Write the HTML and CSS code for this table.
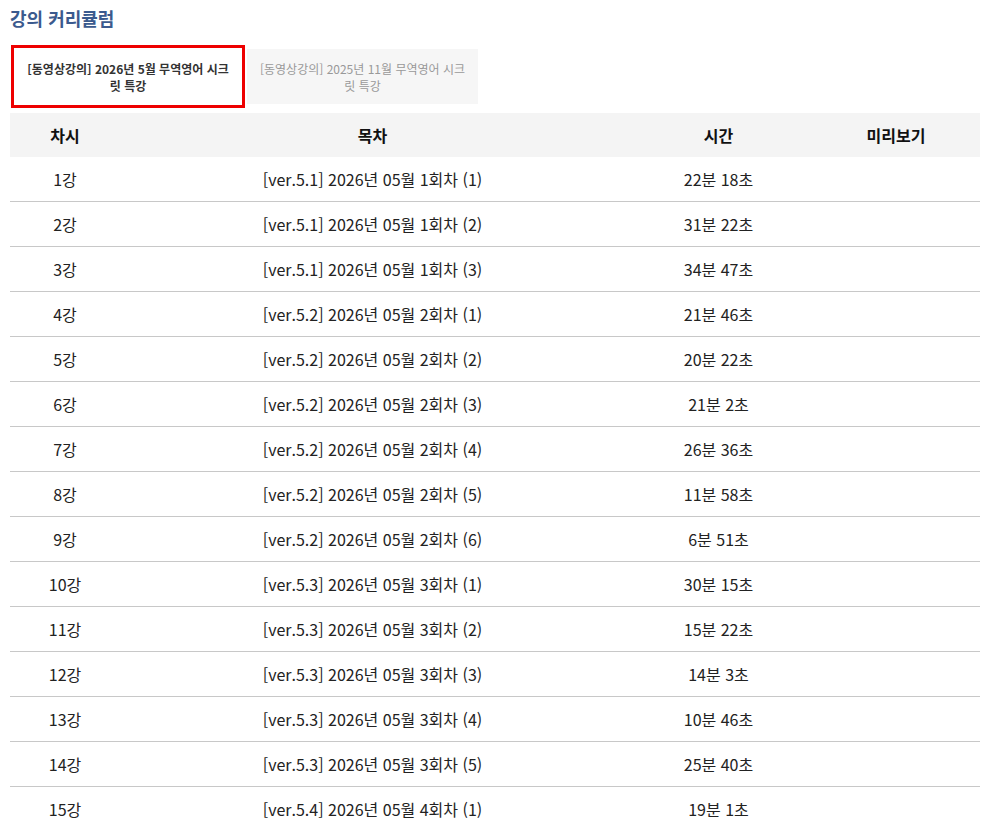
FILE: index.html
```html
<!DOCTYPE html>
<html lang="ko">
<head>
<meta charset="utf-8">
<link rel="stylesheet" href="styles.css">
</head>
<body>
<div class="wrap">
  <h2 class="title">강의 커리큘럼</h2>
  <ul class="tabs">
    <li class="tab active">[동영상강의] 2026년 5월 무역영어 시크<br>릿 특강</li>
    <li class="tab">[동영상강의] 2025년 11월 무역영어 시크<br>릿 특강</li>
  </ul>
  <table class="curri">
    <colgroup>
      <col class="c1"><col class="c2"><col class="c3"><col class="c4">
    </colgroup>
    <thead>
      <tr><th>차시</th><th>목차</th><th>시간</th><th>미리보기</th></tr>
    </thead>
    <tbody>
      <tr><td>1강</td><td>[ver.5.1] 2026년 05월 1회차 (1)</td><td>22분 18초</td><td></td></tr>
      <tr><td>2강</td><td>[ver.5.1] 2026년 05월 1회차 (2)</td><td>31분 22초</td><td></td></tr>
      <tr><td>3강</td><td>[ver.5.1] 2026년 05월 1회차 (3)</td><td>34분 47초</td><td></td></tr>
      <tr><td>4강</td><td>[ver.5.2] 2026년 05월 2회차 (1)</td><td>21분 46초</td><td></td></tr>
      <tr><td>5강</td><td>[ver.5.2] 2026년 05월 2회차 (2)</td><td>20분 22초</td><td></td></tr>
      <tr><td>6강</td><td>[ver.5.2] 2026년 05월 2회차 (3)</td><td>21분 2초</td><td></td></tr>
      <tr><td>7강</td><td>[ver.5.2] 2026년 05월 2회차 (4)</td><td>26분 36초</td><td></td></tr>
      <tr><td>8강</td><td>[ver.5.2] 2026년 05월 2회차 (5)</td><td>11분 58초</td><td></td></tr>
      <tr><td>9강</td><td>[ver.5.2] 2026년 05월 2회차 (6)</td><td>6분 51초</td><td></td></tr>
      <tr><td>10강</td><td>[ver.5.3] 2026년 05월 3회차 (1)</td><td>30분 15초</td><td></td></tr>
      <tr><td>11강</td><td>[ver.5.3] 2026년 05월 3회차 (2)</td><td>15분 22초</td><td></td></tr>
      <tr><td>12강</td><td>[ver.5.3] 2026년 05월 3회차 (3)</td><td>14분 3초</td><td></td></tr>
      <tr><td>13강</td><td>[ver.5.3] 2026년 05월 3회차 (4)</td><td>10분 46초</td><td></td></tr>
      <tr><td>14강</td><td>[ver.5.3] 2026년 05월 3회차 (5)</td><td>25분 40초</td><td></td></tr>
      <tr><td>15강</td><td>[ver.5.4] 2026년 05월 4회차 (1)</td><td>19분 1초</td><td></td></tr>
    </tbody>
  </table>
</div>
</body>
</html>
```
FILE: styles.css
```css
html, body {
  margin: 0;
  padding: 0;
  background: #fff;
}
body {
  font-family: "Noto Sans CJK KR", "Noto Sans", sans-serif;
  color: #222;
}
.wrap {
  padding: 5px 6px 0 10px;
}
.title {
  margin: 0;
  font-size: 18px;
  font-weight: 700;
  line-height: 26px;
  color: #3b5a8e;
}
.tabs {
  list-style: none;
  margin: 14px 0 5px 1px;
  padding: 0;
  display: flex;
  align-items: center;
}
.tab {
  box-sizing: border-box;
  width: 231px;
  height: 55px;
  margin-left: 2px;
  background: #f6f6f6;
  color: #999;
  font-size: 12px;
  line-height: 17px;
  text-align: center;
  display: flex;
  align-items: center;
  justify-content: center;
}
.tab.active {
  width: 234px;
  height: 63px;
  margin-left: 0;
  background: #fff;
  border: 3px solid #ee0000;
  color: #333;
  font-weight: 700;
}
.curri {
  width: 970px;
  border-collapse: collapse;
  table-layout: fixed;
  font-size: 16px;
}
.c1 { width: 110px; }
.c2 { width: 505px; }
.c3 { width: 187px; }
.c4 { width: 168px; }
.curri th {
  background: #f4f4f4;
  height: 44px;
  padding: 0;
  font-weight: 700;
  color: #111;
  text-align: center;
}
.curri td {
  height: 44px;
  padding: 0;
  text-align: center;
  border-bottom: 1px solid #c8c8c8;
  color: #222;
}
```
